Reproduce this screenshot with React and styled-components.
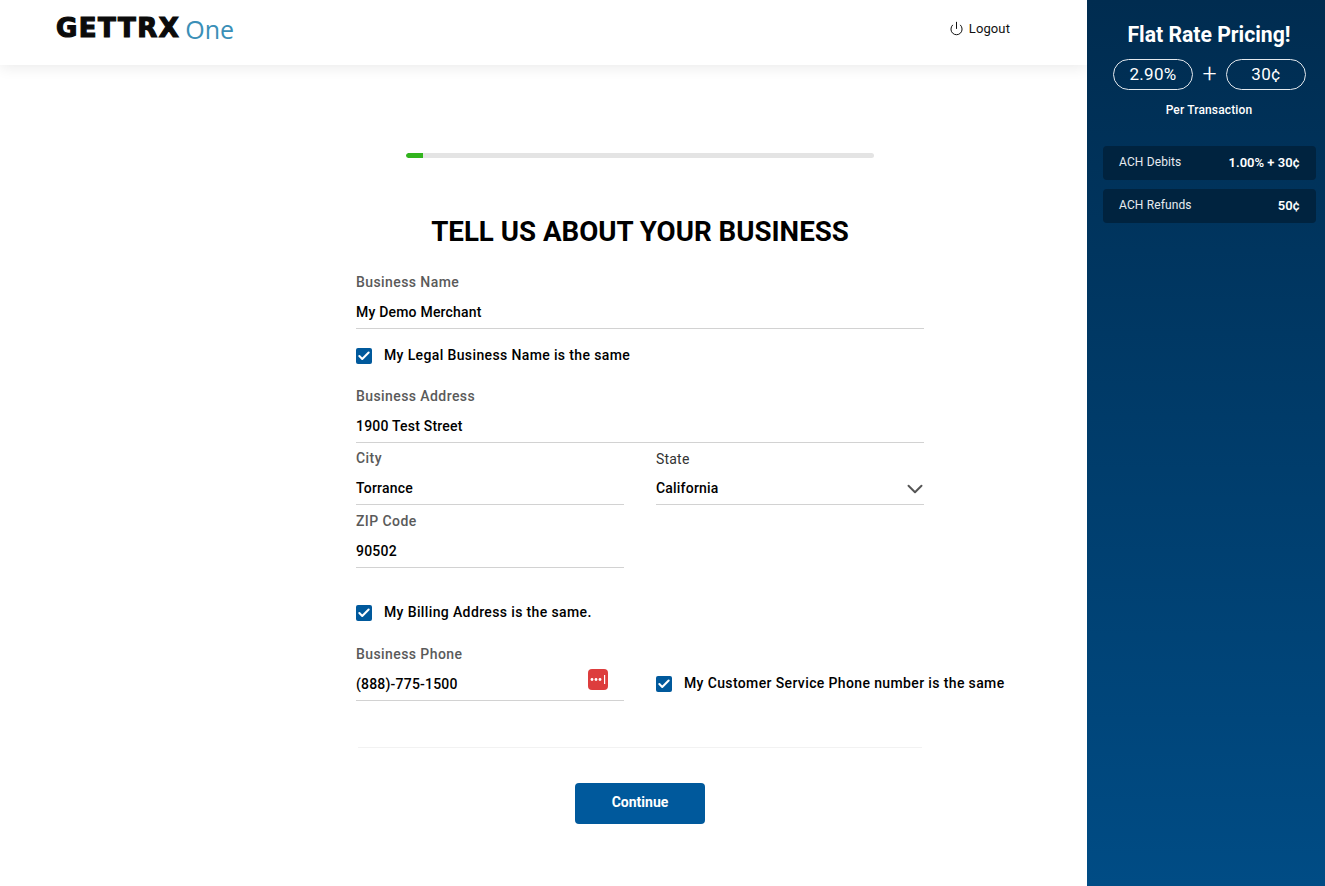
import React from "react";
import styled, { createGlobalStyle } from "styled-components";
import { Check, ChevronDown, Power } from "lucide-react";

const Global = createGlobalStyle`
  html, body { margin: 0; padding: 0; height: 100%; background: #fff; }
  body { font-family: Roboto, "Liberation Sans", sans-serif; color: #000; overflow: hidden; }
  * { box-sizing: border-box; }
`;

const Page = styled.div`
  display: flex;
  width: 1325px;
  height: 886px;
  overflow: hidden;
`;
const Main = styled.main`
  width: 1087px;
  flex: none;
  display: flex;
  flex-direction: column;
`;
const Header = styled.header`
  height: 65px;
  flex: none;
  display: flex;
  align-items: center;
  justify-content: space-between;
  padding: 0 77px 8px 56px;
  background: #fff;
  box-shadow: 0 2px 14px rgba(0, 0, 0, 0.09);
`;
const Logo = styled.div`
  display: flex;
  align-items: baseline;
  gap: 5px;
  margin-top: -2px;
`;
const LogoMark = styled.span`
  font-family: "DejaVu Sans", sans-serif;
  font-weight: 700;
  font-size: 26px;
  letter-spacing: 1.5px;
  line-height: 26px;
  color: #0b0b0b;
  -webkit-text-stroke: 1.2px #0b0b0b;
`;
const LogoOne = styled.span`
  font-family: "Open Sans", sans-serif;
  font-weight: 400;
  font-size: 25px;
  line-height: 26px;
  color: #3a8fb7;
  transform: translateY(2px);
`;
const LogoutLink = styled.div`
  display: flex;
  align-items: center;
  gap: 5px;
  font-size: 13px;
  color: #111;
  letter-spacing: 0.1px;
`;
const Content = styled.div`
  padding-left: 356px;
  width: 924px;
  display: flex;
  flex-direction: column;
`;
const Progress = styled.div`
  width: 468px;
  height: 5px;
  margin: 88px 0 0 50px;
  border-radius: 3px;
  background: #e4e4e4;
  overflow: hidden;
`;
const ProgressFill = styled.div`
  height: 100%;
  background: #32b41e;
  border-radius: 3px 0 0 3px;
`;
const Title = styled.h1`
  margin: 57px 0 0;
  font-size: 27.7px;
  line-height: 34px;
  font-weight: 700;
  text-align: center;
  color: #000;
`;
const Form = styled.form`
  display: flex;
  flex-direction: column;
  margin-top: 23px;
`;
const Field = styled.div`
  position: relative;
  height: 57px;
  margin-bottom: ${(p) => p.$mb ?? 6}px;
  border-bottom: 1px solid #d2d2d2;
`;
const Label = styled.div`
  font-size: 14px;
  line-height: 20px;
  letter-spacing: ${(p) => (p.$plain ? 0.2 : 0.42)}px;
  font-weight: ${(p) => (p.$plain ? 400 : 500)};
  color: ${(p) => (p.$plain ? "#333" : "#5a5a5a")};
  padding-top: ${(p) => (p.$plain ? 1 : 0)}px;
  margin-bottom: ${(p) => (p.$plain ? -1 : 0)}px;
`;
const Value = styled.div`
  display: flex;
  align-items: center;
  justify-content: space-between;
  height: 36px;
  padding-top: 4px;
  font-size: 14px;
  font-weight: 500;
  letter-spacing: 0.2px;
  color: #000;
`;
const Row = styled.div`
  display: grid;
  grid-template-columns: 268px 268px;
  column-gap: 32px;
`;
const CheckRow = styled.div`
  display: flex;
  align-items: center;
  gap: 12px;
  height: 16px;
  padding-bottom: 2px;
  margin: ${(p) => p.$m};
  font-size: 14px;
  font-weight: 500;
  letter-spacing: 0.37px;
  white-space: nowrap;
  color: #000;
`;
const Box = styled.span`
  width: 16px;
  height: 16px;
  flex: none;
  display: inline-flex;
  align-items: center;
  justify-content: center;
  margin-top: 2px;
  border-radius: 2px;
  background: #00599c;
  color: #fff;
`;
const KeyBadge = styled.span`
  position: absolute;
  right: 16px;
  top: 25px;
  width: 20px;
  height: 21px;
  border-radius: 4px;
  background: #dd3d3d;
  display: flex;
  align-items: center;
  justify-content: center;
`;
const Rule = styled.hr`
  width: 564px;
  height: 1px;
  margin: 46px 0 0 2px;
  border: 0;
  background: #f2f2f2;
`;
const Continue = styled.button`
  align-self: center;
  width: 130px;
  height: 41px;
  margin-top: 35px;
  padding: 0 0 3px;
  border: 0;
  border-radius: 4px;
  background: #00599c;
  color: #fff;
  font-family: inherit;
  font-size: 14px;
  font-weight: 700;
`;
const Side = styled.aside`
  width: 238px;
  flex: none;
  height: 886px;
  padding: 22px 9px 0 16px;
  background: linear-gradient(180deg, #002c50 0%, #004c85 100%);
  color: #fff;
`;
const SideTitle = styled.div`
  font-size: 21.2px;
  font-weight: 700;
  line-height: 26px;
  text-align: center;
  margin-right: 1px;
`;
const Pricing = styled.div`
  display: flex;
  align-items: center;
  justify-content: space-between;
  padding: 0 10px;
  margin-top: 11px;
`;
const Pill = styled.div`
  width: 80px;
  height: 31px;
  padding-bottom: 2px;
  border: 1px solid #e4e9ee;
  border-radius: 16px;
  display: flex;
  align-items: center;
  justify-content: center;
  font-size: 17px;
  letter-spacing: 0.3px;
`;
const Plus = styled.span`
  font-size: 25px;
  font-weight: 300;
  line-height: 28px;
  margin-bottom: 2px;
`;
const PerLabel = styled.div`
  margin-top: 12px;
  font-size: 12px;
  line-height: 16px;
  font-weight: 500;
  text-align: center;
  margin-right: 1px;
  letter-spacing: 0.15px;
`;
const RateList = styled.div`
  display: flex;
  flex-direction: column;
  gap: 9px;
  margin-top: 28px;
`;
const RateRow = styled.div`
  height: 34px;
  padding: 0 16px;
  display: flex;
  align-items: center;
  justify-content: space-between;
  border-radius: 4px;
  background: #00233f;
  font-size: 12px;
`;
const RateName = styled.span`
  font-weight: 400;
  color: #e6ebf0;
  letter-spacing: 0.13px;
  margin-bottom: 2px;
`;
const RateValue = styled.span`
  font-size: 13px;
  font-weight: 600;
  margin-bottom: 2px;
`;

function Tick() {
  return (
    <Box>
      <Check size={14} strokeWidth={3.5} />
    </Box>
  );
}

function TextField({ label, value, children, mb, plain }) {
  return (
    <Field $mb={mb}>
      <Label $plain={plain}>{label}</Label>
      <Value>
        {value}
        {children}
      </Value>
    </Field>
  );
}

export default function App() {
  return (
    <Page>
      <Global />
      <Main>
        <Header>
          <Logo>
            <LogoMark>GETTRX</LogoMark>
            <LogoOne>One</LogoOne>
          </Logo>
          <LogoutLink>
            <Power size={15} strokeWidth={1.6} />
            Logout
          </LogoutLink>
        </Header>
        <Content>
          <Progress>
            <ProgressFill style={{ width: `${(17 / 468) * 100}%` }} />
          </Progress>
          <Title>TELL US ABOUT YOUR BUSINESS</Title>
          <Form>
            <TextField label="Business Name" value="My Demo Merchant" mb={19} />
            <CheckRow $m="0 0 22px">
              <Tick />
              My Legal Business Name is the same
            </CheckRow>
            <TextField label="Business Address" value="1900 Test Street" mb={5} />
            <Row>
              <TextField label="City" value="Torrance" />
              <TextField label="State" value="California" plain>
                <ChevronDown size={26} strokeWidth={1.8} color="#555" style={{ marginRight: -4, marginBottom: -2 }} />
              </TextField>
            </Row>
            <Row>
              <TextField label="ZIP Code" value="90502" mb={37} />
            </Row>
            <CheckRow $m="0 0 23px">
              <Tick />
              My Billing Address is the same.
            </CheckRow>
            <Row>
              <TextField label="Business Phone" value="(888)-775-1500" mb={0}>
                <KeyBadge>
                  <svg width="17" height="9" viewBox="0 0 17 9" fill="#fff">
                    <circle cx="2" cy="4.5" r="1.4" />
                    <circle cx="6" cy="4.5" r="1.4" />
                    <circle cx="10" cy="4.5" r="1.4" />
                    <rect x="14" y="0" width="1.2" height="9" />
                  </svg>
                </KeyBadge>
              </TextField>
              <CheckRow $m="32px 0 0">
                <Tick />
                My Customer Service Phone number is the same
              </CheckRow>
            </Row>
            <Rule />
            <Continue type="button">Continue</Continue>
          </Form>
        </Content>
      </Main>
      <Side>
        <SideTitle>Flat Rate Pricing!</SideTitle>
        <Pricing>
          <Pill>2.90%</Pill>
          <Plus>+</Plus>
          <Pill>30¢</Pill>
        </Pricing>
        <PerLabel>Per Transaction</PerLabel>
        <RateList>
          <RateRow>
            <RateName>ACH Debits</RateName>
            <RateValue>1.00% + 30¢</RateValue>
          </RateRow>
          <RateRow>
            <RateName>ACH Refunds</RateName>
            <RateValue>50¢</RateValue>
          </RateRow>
        </RateList>
      </Side>
    </Page>
  );
}
